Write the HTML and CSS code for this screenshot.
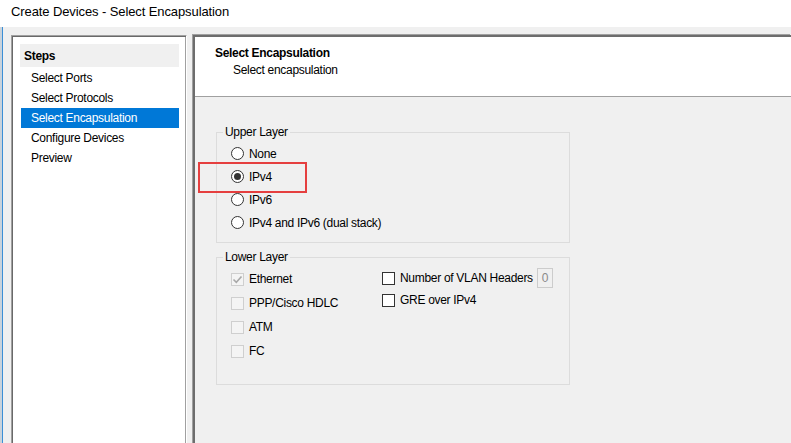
FILE: index.html
```html
<!DOCTYPE html>
<html>
<head>
<meta charset="utf-8">
<link rel="stylesheet" href="styles.css">
</head>
<body>
<div class="edge"></div>
<div class="titlebar">Create Devices - Select Encapsulation</div>
<div class="main">
  <aside class="steps">
    <div class="steps-head">Steps</div>
    <ul class="steps-list">
      <li>Select Ports</li>
      <li>Select Protocols</li>
      <li class="active">Select Encapsulation</li>
      <li>Configure Devices</li>
      <li>Preview</li>
    </ul>
  </aside>
  <section class="content">
    <header class="content-head">
      <div class="content-title">Select Encapsulation</div>
      <div class="content-sub">Select encapsulation</div>
    </header>
    <div class="content-body">
      <fieldset class="group upper">
        <legend>Upper Layer</legend>
        <div class="opt"><span class="radio"></span>None</div>
        <div class="opt"><span class="radio on"></span>IPv4</div>
        <div class="opt"><span class="radio"></span>IPv6</div>
        <div class="opt"><span class="radio"></span>IPv4 and IPv6 (dual stack)</div>
      </fieldset>
      <fieldset class="group lower">
        <legend>Lower Layer</legend>
        <div class="cols">
          <div class="col left">
            <div class="chk"><span class="box disabled"><svg width="11" height="11" viewBox="0 0 11 11"><path d="M1.5 5.5 L4.3 8.3 L9.5 2.5" fill="none" stroke="#a8a8a8" stroke-width="1.6"/></svg></span>Ethernet</div>
            <div class="chk"><span class="box disabled"></span>PPP/Cisco HDLC</div>
            <div class="chk"><span class="box disabled"></span>ATM</div>
            <div class="chk"><span class="box disabled"></span>FC</div>
          </div>
          <div class="col right">
            <div class="chk r"><span class="box"></span>Number of VLAN Headers<span class="num">0</span></div>
            <div class="chk r"><span class="box"></span>GRE over IPv4</div>
          </div>
        </div>
      </fieldset>
      <div class="mark"></div>
    </div>
  </section>
</div>
</body>
</html>
```
FILE: styles.css
```css
html, body {
  margin: 0;
  padding: 0;
  height: 100%;
  overflow: hidden;
}
body {
  background: #f0f0f0;
  font-family: "Liberation Sans", Arial, sans-serif;
  font-size: 12px;
  letter-spacing: -0.3px;
  color: #000;
  position: relative;
}
.edge {
  position: absolute;
  left: 0;
  top: 27px;
  bottom: 0;
  width: 3px;
  background: linear-gradient(to right, #c9d3dc 0 2px, #3c8fd6 2px 3px);
}
.titlebar {
  height: 27px;
  background: #fff;
  box-sizing: border-box;
  padding-left: 11px;
  line-height: 24px;
  font-size: 13px;
  letter-spacing: -0.1px;
  color: #000;
}
.main {
  display: flex;
  gap: 6px;
  padding: 8px 0 0 11px;
  height: 430px;
}
.steps {
  width: 176px;
  flex: none;
  box-sizing: border-box;
  background: #fff;
  border: 1px solid;
  border-color: #a0a0a0 #fff #fff #a0a0a0;
  box-shadow: inset 1px 1px 0 #696969, inset -1px -1px 0 #a0a0a0;
  padding: 8px 7px 0 8px;
}
.steps-head {
  background: #f0f0f0;
  height: 23px;
  line-height: 24px;
  font-weight: bold;
  padding-left: 4px;
}
.steps-list {
  list-style: none;
  margin: 1px 0 0 1px;
  padding: 0;
}
.steps-list li {
  height: 20px;
  line-height: 20px;
  padding-left: 10px;
}
.steps-list li.active {
  background: #0078d7;
  color: #fff;
}
.content {
  flex: 1;
  display: flex;
  flex-direction: column;
  border-top: 2px solid #6d6d6d;
  border-left: 2px solid #6d6d6d;
  box-shadow: -1px -1px 0 #a0a0a0;
}
.content-head {
  background: #fff;
  height: 60px;
  box-sizing: border-box;
  border-bottom: 1px solid #a0a0a0;
  padding: 9px 0 0 20px;
}
.content-title {
  font-weight: bold;
  line-height: 14px;
}
.content-sub {
  line-height: 14px;
  margin-top: 3px;
  padding-left: 18px;
}
.content-body {
  position: relative;
  flex: 1;
  padding: 28px 0 0 21px;
}
.group {
  width: 354px;
  box-sizing: border-box;
  margin: 0;
  border: 1px solid #dcdcdc;
  padding: 3px 6px 8px 6px;
}
.group legend {
  padding: 0 2px;
  line-height: 14px;
}
.upper {
  height: 118px;
}
.lower {
  margin-top: 7px;
  height: 135px;
  padding-top: 3px;
}
.opt {
  display: flex;
  align-items: center;
  height: 23px;
  margin-left: 8px;
  white-space: nowrap;
}
.radio {
  width: 13px;
  height: 13px;
  box-sizing: border-box;
  border: 1px solid #333;
  border-radius: 50%;
  background: #fff;
  margin-right: 5px;
  display: flex;
  align-items: center;
  justify-content: center;
}
.radio.on::after {
  content: "";
  width: 7px;
  height: 7px;
  border-radius: 50%;
  background: #333;
}
.cols {
  display: flex;
  padding-left: 8px;
}
.col.left {
  width: 151px;
  flex: none;
}
.col.right {
  width: 171px;
  flex: none;
}
.chk {
  display: flex;
  align-items: center;
  height: 24px;
  white-space: nowrap;
}
.chk.r {
  height: 22px;
}
.box {
  width: 13px;
  height: 13px;
  box-sizing: border-box;
  border: 1px solid #333;
  background: #fff;
  margin-right: 5px;
  display: flex;
  align-items: center;
  justify-content: center;
  flex: none;
}
.box.disabled {
  border-color: #cfcfcf;
  background: #f4f4f4;
}
.num {
  margin-left: auto;
  width: 16px;
  height: 20px;
  flex: none;
  box-sizing: border-box;
  border: 1px solid #cccccc;
  background: #f0f0f0;
  color: #8a8a8a;
  text-align: center;
  line-height: 18px;
  letter-spacing: 0;
}
.mark {
  position: absolute;
  left: 3px;
  top: 65px;
  width: 109px;
  height: 31px;
  box-sizing: border-box;
  border: 2px solid #e53f3f;
}
```
